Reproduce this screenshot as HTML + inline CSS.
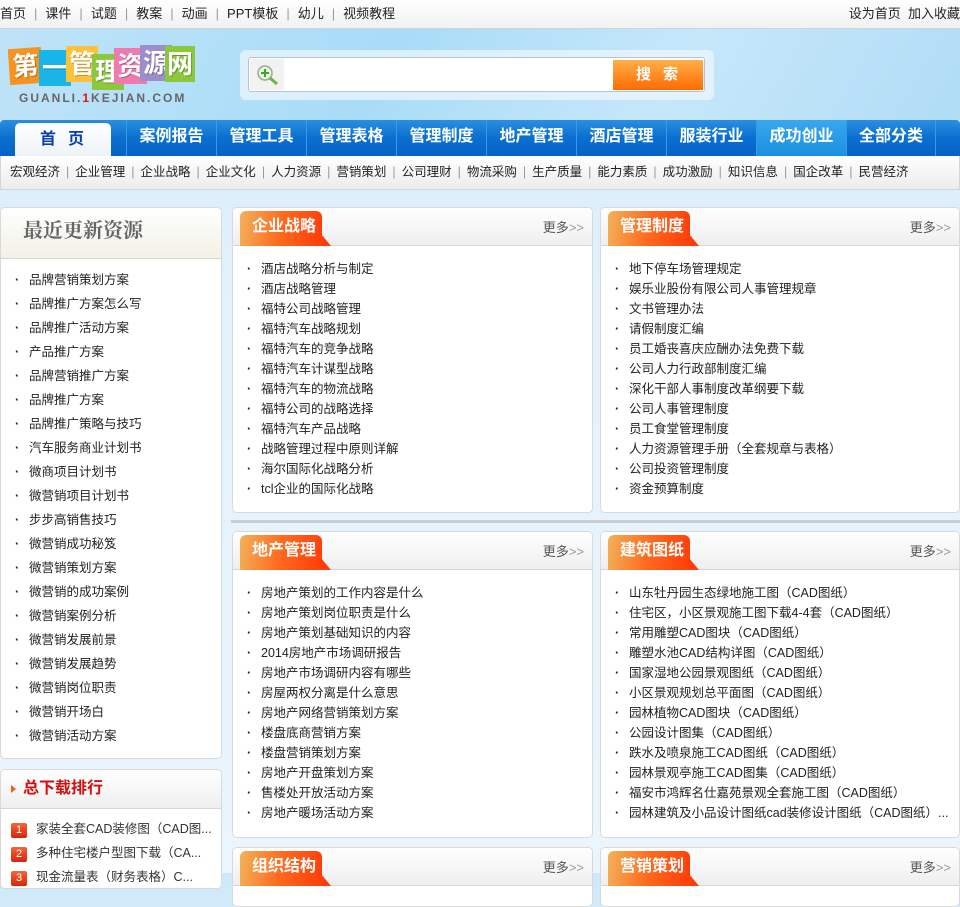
<!DOCTYPE html>
<html><head><meta charset="utf-8">
<style>
*{margin:0;padding:0;box-sizing:border-box}
body{width:960px;height:873px;overflow:hidden;position:relative;font-family:"Liberation Sans","Noto Sans CJK SC",sans-serif;font-size:12px;color:#333;background:linear-gradient(180deg,#cfe9fa 0px,#e3f2fc 300px,#eaf5fd 873px)}
.abs{position:absolute}
#top{left:0;top:0;width:960px;height:29px;background:linear-gradient(#fff,#f1f1f1);border-bottom:1px solid #c9d6df;font-size:13px;line-height:28px;color:#222}
#top span.s{color:#999;margin:0 8px}
#hdr{left:0;top:29px;width:960px;height:91px;background:linear-gradient(120deg,#bfe3f8,#a9dcf8 40%,#c6e7fa 70%,#b0dcf6)}
.lg{position:absolute;top:0;height:36px;color:#fff;font-weight:bold;font-size:26px;line-height:36px;text-align:center;text-shadow:1px 1px 0 rgba(0,0,0,.25)}
#nav{left:0;top:120px;width:960px;height:36px;background:linear-gradient(#2a8fe0,#0a6fd0 50%,#0663c6);border-radius:4px 4px 0 0}
.ni{position:absolute;top:0;width:90px;height:36px;line-height:34px;text-align:center;color:#fff;font-weight:bold;font-size:16px;border-left:1px solid #3a9ae8}
#sub{left:0;top:156px;width:960px;height:34px;background:linear-gradient(#fff,#ececec);border:1px solid #d6d6d6;border-top:none;font-size:12.5px;line-height:33px;padding-left:9px;color:#222;white-space:nowrap;overflow:hidden}
#sub span.s{color:#999;margin:0 6px}
.box{position:absolute;background:#fff;border:1px solid #d9d9d9;border-radius:5px;overflow:hidden}
.ph{height:38px;background:linear-gradient(#fff,#efefef);border-bottom:1px solid #d6d6d6;position:relative}
.tab{position:absolute;left:7px;top:3px;height:35px;width:82px;border-radius:6px 6px 0 0;background:linear-gradient(100deg,#f2b25a,#ff6a1e 50%,#ff3c0a);color:#fff;font-weight:bold;font-size:16px;line-height:32px;padding-left:12px}
.tab:after{content:"";position:absolute;right:-9px;bottom:0;border-left:10px solid #ff3c0a;border-top:12px solid transparent}
.more{position:absolute;right:8px;top:9px;font-size:13px;color:#555}
.more b{font-weight:normal;color:#999}
ul{list-style:none}
.pl{padding:13px 0 0 14px}
.pl li{height:20px;line-height:20px;font-size:12.5px;color:#222;white-space:nowrap}
.pl li:before{content:"·";display:inline-block;width:14px;font-weight:bold}
.sl li{height:24px;line-height:24px;font-size:12.5px;padding-left:14px;color:#222}
.sl li:before{content:"·";display:inline-block;width:14px;font-weight:bold}
.num{display:inline-block;width:16px;height:15px;background:linear-gradient(#f7643a,#d8250a);color:#fff;font-size:11px;line-height:15px;text-align:center;margin-right:9px;border-radius:2px}
</style></head><body>
<div id="top" class="abs">首页<span class="s">|</span>课件<span class="s">|</span>试题<span class="s">|</span>教案<span class="s">|</span>动画<span class="s">|</span>PPT模板<span class="s">|</span>幼儿<span class="s">|</span>视频教程
<span style="position:absolute;right:0;top:0">设为首页&nbsp;&nbsp;加入收藏</span></div>
<div id="hdr" class="abs">
 <div class="abs" style="left:9px;top:15px;width:185px;height:44px">
  <div class="lg" style="left:0;top:4px;width:33px;background:#f7931e;transform:rotate(-4deg)">第</div>
  <div class="lg" style="left:30px;top:6px;width:32px;background:#19b4e8">一</div>
  <div class="lg" style="left:57px;top:2px;width:32px;background:#fcc23a">管</div>
  <div class="lg" style="left:83px;top:10px;width:32px;background:#8cc83c">理</div>
  <div class="lg" style="left:105px;top:4px;width:33px;background:#ee7ab0">资</div>
  <div class="lg" style="left:131px;top:1px;width:32px;background:#9b8ecb">源</div>
  <div class="lg" style="left:156px;top:2px;width:30px;background:#8cc83c">网</div>
 </div>
 <div class="abs" style="left:19px;top:62px;font-size:12px;font-weight:bold;letter-spacing:2px;color:#666">GUANLI.<span style="color:#e01010">1</span>KEJIAN.COM</div>
 <div class="abs" style="left:240px;top:21px;width:474px;height:50px;background:rgba(240,248,255,.7);border-radius:6px"></div>
 <div class="abs" style="left:248px;top:28px;width:457px;height:35px;background:#fff;border:1px solid #b9c3cc;border-radius:3px">
  <div class="abs" style="left:1px;top:1px;width:34px;height:31px;background:#f2f2f2"><svg width="34" height="31"><circle cx="15" cy="14" r="7" fill="#eaf7e0" stroke="#9a9" stroke-width="1.5"/><path d="M11 14h8M15 10v8" stroke="#3a3" stroke-width="2"/><path d="M20 19l7 6" stroke="#6b3" stroke-width="3"/></svg></div>
  <div class="abs" style="left:364px;top:2px;width:90px;height:30px;background:linear-gradient(#ffb04a,#ff6a00);color:#fff;font-weight:bold;font-size:15px;line-height:30px;text-align:center;letter-spacing:12px;padding-left:10px">搜索</div>
 </div>
</div>
<div id="nav" class="abs">
 <div class="abs" style="left:15px;top:3px;width:96px;height:33px;background:linear-gradient(#fff,#eef3f8);border-radius:5px 5px 0 0;color:#0a3fb0;font-weight:bold;font-size:16px;line-height:33px;text-align:center;letter-spacing:12px;padding-left:10px">首页</div>
 <div class="ni" style="left:126px">案例报告</div><div class="ni" style="left:216px">管理工具</div><div class="ni" style="left:306px">管理表格</div><div class="ni" style="left:396px">管理制度</div><div class="ni" style="left:486px">地产管理</div><div class="ni" style="left:576px">酒店管理</div><div class="ni" style="left:666px">服装行业</div><div class="ni" style="left:756px;background:linear-gradient(#38a8ee,#1a90e0)">成功创业</div><div class="ni" style="left:846px;border-right:1px solid #3a9ae8">全部分类</div>
</div>
<div id="sub" class="abs">宏观经济<span class="s">|</span>企业管理<span class="s">|</span>企业战略<span class="s">|</span>企业文化<span class="s">|</span>人力资源<span class="s">|</span>营销策划<span class="s">|</span>公司理财<span class="s">|</span>物流采购<span class="s">|</span>生产质量<span class="s">|</span>能力素质<span class="s">|</span>成功激励<span class="s">|</span>知识信息<span class="s">|</span>国企改革<span class="s">|</span>民营经济</div>

<div class="box" style="left:0;top:207px;width:222px;height:552px">
 <div style="height:51px;background:linear-gradient(#fff,#f1f1e6);border-bottom:1px solid #d6d6d6;font-size:20px;font-weight:bold;color:#666;line-height:46px;padding-left:22px;font-family:'Liberation Serif','Noto Serif CJK SC',serif">最近更新资源</div>
 <ul class="sl" style="padding-top:9px">
 <li>品牌营销策划方案</li><li>品牌推广方案怎么写</li><li>品牌推广活动方案</li><li>产品推广方案</li><li>品牌营销推广方案</li><li>品牌推广方案</li><li>品牌推广策略与技巧</li><li>汽车服务商业计划书</li><li>微商项目计划书</li><li>微营销项目计划书</li><li>步步高销售技巧</li><li>微营销成功秘笈</li><li>微营销策划方案</li><li>微营销的成功案例</li><li>微营销案例分析</li><li>微营销发展前景</li><li>微营销发展趋势</li><li>微营销岗位职责</li><li>微营销开场白</li><li>微营销活动方案</li>
 </ul>
</div>
<div class="box" style="left:0;top:769px;width:222px;height:120px">
 <div style="height:39px;background:linear-gradient(#fff,#efefef);border-bottom:1px solid #d6d6d6;font-size:16px;font-weight:bold;color:#d01010;line-height:38px;padding-left:22px;position:relative"><span style="position:absolute;left:10px;top:15px;border-left:5px solid #f06010;border-top:4px solid transparent;border-bottom:4px solid transparent"></span>总下载排行</div>
 <ul style="padding:12px 0 0 10px;font-size:12.5px;white-space:nowrap">
 <li style="height:24px;line-height:16px"><span class="num">1</span>家装全套CAD装修图（CAD图...</li>
 <li style="height:24px;line-height:16px"><span class="num">2</span>多种住宅楼户型图下载（CA...</li>
 <li style="height:24px;line-height:16px"><span class="num">3</span>现金流量表（财务表格）C...</li>
 </ul>
</div>

<div class="abs" style="left:231px;top:520px;width:729px;height:3px;background:#ccc"></div>

<div class="box" style="left:232px;top:207px;width:361px;height:306px"><div class="ph"><div class="tab">企业战略</div><div class="more">更多<b>&gt;&gt;</b></div></div>
<ul class="pl"><li>酒店战略分析与制定</li><li>酒店战略管理</li><li>福特公司战略管理</li><li>福特汽车战略规划</li><li>福特汽车的竞争战略</li><li>福特汽车计谋型战略</li><li>福特汽车的物流战略</li><li>福特公司的战略选择</li><li>福特汽车产品战略</li><li>战略管理过程中原则详解</li><li>海尔国际化战略分析</li><li>tcl企业的国际化战略</li></ul></div>
<div class="box" style="left:600px;top:207px;width:360px;height:306px"><div class="ph"><div class="tab">管理制度</div><div class="more">更多<b>&gt;&gt;</b></div></div>
<ul class="pl"><li>地下停车场管理规定</li><li>娱乐业股份有限公司人事管理规章</li><li>文书管理办法</li><li>请假制度汇编</li><li>员工婚丧喜庆应酬办法免费下载</li><li>公司人力行政部制度汇编</li><li>深化干部人事制度改革纲要下载</li><li>公司人事管理制度</li><li>员工食堂管理制度</li><li>人力资源管理手册（全套规章与表格）</li><li>公司投资管理制度</li><li>资金预算制度</li></ul></div>

<div class="box" style="left:232px;top:531px;width:361px;height:307px"><div class="ph"><div class="tab">地产管理</div><div class="more">更多<b>&gt;&gt;</b></div></div>
<ul class="pl"><li>房地产策划的工作内容是什么</li><li>房地产策划岗位职责是什么</li><li>房地产策划基础知识的内容</li><li>2014房地产市场调研报告</li><li>房地产市场调研内容有哪些</li><li>房屋两权分离是什么意思</li><li>房地产网络营销策划方案</li><li>楼盘底商营销方案</li><li>楼盘营销策划方案</li><li>房地产开盘策划方案</li><li>售楼处开放活动方案</li><li>房地产暖场活动方案</li></ul></div>
<div class="box" style="left:600px;top:531px;width:360px;height:307px"><div class="ph"><div class="tab">建筑图纸</div><div class="more">更多<b>&gt;&gt;</b></div></div>
<ul class="pl"><li>山东牡丹园生态绿地施工图（CAD图纸）</li><li>住宅区，小区景观施工图下载4-4套（CAD图纸）</li><li>常用雕塑CAD图块（CAD图纸）</li><li>雕塑水池CAD结构详图（CAD图纸）</li><li>国家湿地公园景观图纸（CAD图纸）</li><li>小区景观规划总平面图（CAD图纸）</li><li>园林植物CAD图块（CAD图纸）</li><li>公园设计图集（CAD图纸）</li><li>跌水及喷泉施工CAD图纸（CAD图纸）</li><li>园林景观亭施工CAD图集（CAD图纸）</li><li>福安市鸿辉名仕嘉苑景观全套施工图（CAD图纸）</li><li>园林建筑及小品设计图纸cad装修设计图纸（CAD图纸）...</li></ul></div>

<div class="box" style="left:232px;top:847px;width:361px;height:60px"><div class="ph"><div class="tab">组织结构</div><div class="more">更多<b>&gt;&gt;</b></div></div></div>
<div class="box" style="left:600px;top:847px;width:360px;height:60px"><div class="ph"><div class="tab">营销策划</div><div class="more">更多<b>&gt;&gt;</b></div></div></div>
</body></html>
